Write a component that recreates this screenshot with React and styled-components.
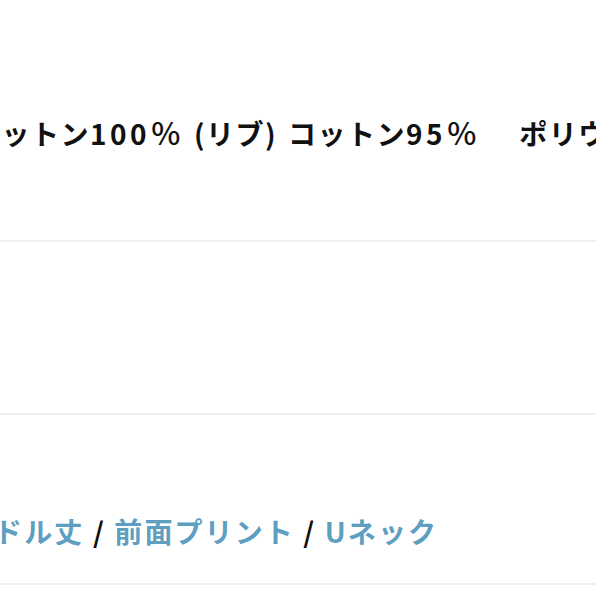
import React from "react";
import styled, { createGlobalStyle } from "styled-components";

const Global = createGlobalStyle`
  html, body { margin: 0; padding: 0; background: #fff; overflow: hidden; }
  body { font-family: "Noto Sans CJK JP", "Noto Sans", sans-serif; }
`;

const Page = styled.div`
  width: 596px;
  height: 596px;
  overflow: hidden;
  display: flex;
  flex-direction: column;
`;

const Section = styled.div`
  height: ${(p) => p.$h}px;
  flex: none;
  border-bottom: 2px solid #efefef;
  display: flex;
  align-items: flex-start;
  padding-top: ${(p) => p.$pt || 0}px;
  box-sizing: border-box;
`;

const Line = styled.div`
  margin-left: ${(p) => p.$shift}px;
  white-space: pre;
  font-size: 28px;
  line-height: 40px;
  font-weight: 600;
  color: #111;
  letter-spacing: ${(p) => p.$ls}px;
  word-spacing: ${(p) => p.$ws || 0}px;
`;

const Num = styled.span`
  letter-spacing: 3.5px;
`;

const Percent = styled.span`
  display: inline-block;
  width: 33px;
  text-align: center;
  font-size: 31px;
  font-weight: 500;
`;

const Link = styled.span`
  color: #5d9ec1;
`;

const Sep = styled.span`
  color: #111;
`;

export default function App() {
  return (
    <>
      <Global />
      <Page>
        <Section $h={242} $pt={112}>
          <Line $shift={-28} $ls={1.5} $ws={3}>
            コットン<Num>100</Num><Percent>%</Percent> (リブ) コットン<Num>95</Num><Percent>%</Percent>　 ポリウレタン<Num>5</Num><Percent>%</Percent>
          </Line>
        </Section>
        <Section $h={173} />
        <Section $h={170} $pt={96}>
          <Line $shift={-36} $ls={2.1} $ws={0}>
            <Link>ミドル丈</Link> <Sep>/</Sep> <Link>前面プリント</Link> <Sep>/</Sep> <Link>Uネック</Link>
          </Line>
        </Section>
      </Page>
    </>
  );
}
